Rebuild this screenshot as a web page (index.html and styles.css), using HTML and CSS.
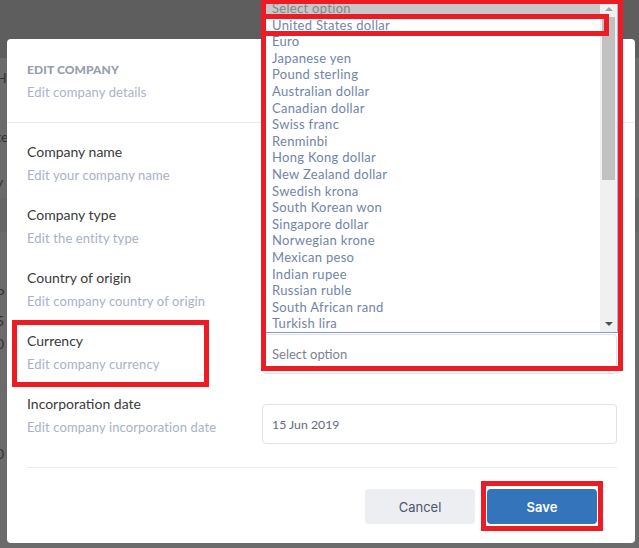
FILE: index.html
```html
<!DOCTYPE html>
<html>
<head>
<meta charset="utf-8">
<link rel="stylesheet" href="styles.css">
</head>
<body>
<div class="backdrop">
  <div class="bd-top"></div>
  <div class="bd-body">
    <div class="bd-line l1">H</div>
    <div class="bd-line l2">te</div>
    <div class="bd-line l3">y</div>
    <div class="bd-band"></div>
    <div class="bd-line l4">P</div>
    <div class="bd-line l5">5</div>
    <div class="bd-line l6">0</div>
    <div class="bd-line l7">0</div>
  </div>
</div>

<div class="modal">
  <div class="modal-head">
    <div class="title">EDIT COMPANY</div>
    <div class="subtitle">Edit company details</div>
  </div>
  <div class="modal-body">
    <div class="row">
      <div class="lbl"><div class="label">Company name</div><div class="desc">Edit your company name</div></div>
      <div class="field"></div>
    </div>
    <div class="row">
      <div class="lbl"><div class="label">Company type</div><div class="desc">Edit the entity type</div></div>
      <div class="field"></div>
    </div>
    <div class="row">
      <div class="lbl"><div class="label">Country of origin</div><div class="desc">Edit company country of origin</div></div>
      <div class="field"></div>
    </div>
    <div class="row">
      <div class="lbl"><div class="label">Currency</div><div class="desc">Edit company currency</div></div>
      <div class="field f-currency"><div class="box">Select option</div></div>
    </div>
    <div class="row">
      <div class="lbl"><div class="label">Incorporation date</div><div class="desc">Edit company incorporation date</div></div>
      <div class="field f-date"><div class="box date">15 Jun 2019</div></div>
    </div>
  </div>
  <div class="modal-foot">
    <button class="btn cancel">Cancel</button>
    <button class="btn save">Save</button>
  </div>
</div>

<div class="listbox">
  <div class="options">
    <div class="opt hl">Select option</div>
    <div class="opt">United States dollar</div>
    <div class="opt">Euro</div>
    <div class="opt">Japanese yen</div>
    <div class="opt">Pound sterling</div>
    <div class="opt">Australian dollar</div>
    <div class="opt">Canadian dollar</div>
    <div class="opt">Swiss franc</div>
    <div class="opt">Renminbi</div>
    <div class="opt">Hong Kong dollar</div>
    <div class="opt">New Zealand dollar</div>
    <div class="opt">Swedish krona</div>
    <div class="opt">South Korean won</div>
    <div class="opt">Singapore dollar</div>
    <div class="opt">Norwegian krone</div>
    <div class="opt">Mexican peso</div>
    <div class="opt">Indian rupee</div>
    <div class="opt">Russian ruble</div>
    <div class="opt">South African rand</div>
    <div class="opt">Turkish lira</div>
  </div>
  <div class="scroll">
    <div class="sb-btn"><span class="arrow-up"></span></div>
    <div class="thumb"></div>
    <div class="sb-space"></div>
    <div class="sb-btn"><span class="arrow-down"></span></div>
  </div>
</div>

<div class="mark mark-list"></div>
<div class="mark mark-item"></div>
<div class="mark mark-currency"></div>
<div class="mark mark-save"></div>
</body>
</html>
```

FILE: styles.css
```css
* { box-sizing: border-box; margin: 0; padding: 0; }
html, body { width: 639px; height: 548px; overflow: hidden; }
body {
  position: relative;
  background: #6b6b6b;
  font-family: Lato, "Liberation Sans", sans-serif;
}

/* dimmed page behind the dialog */
.backdrop { height: 548px; display: flex; flex-direction: column; }
.bd-top { height: 58px; background: #5e5e5e; flex: none; }
.bd-body { flex: 1; color: #333; font-size: 14px; }
.bd-line { margin-left: -4px; line-height: 16px; }
.l1 { margin-top: 12px; }
.l2 { margin-top: 43px; }
.l3 { margin-top: 29px; }
.bd-band { height: 34px; margin-top: 8px; background: #666; }
.l4 { margin-top: 54px; }
.l5 { margin-top: 11px; }
.l6 { margin-top: 7px; }
.l7 { margin-top: 94px; }

/* dialog */
.modal {
  position: absolute;
  left: 7px;
  top: 39px;
  width: 628px;
  height: 504px;
  background: #fff;
  border-radius: 4px;
  display: flex;
  flex-direction: column;
}
.modal-head {
  padding: 23px 20px 21px;
  border-bottom: 1px solid #ebebeb;
}
.title {
  font-size: 12px;
  font-weight: 900;
  line-height: 16px;
  color: #979eac;
  letter-spacing: 0.1px;
}
.subtitle {
  margin-top: 5px;
  font-size: 13px;
  line-height: 18px;
  color: #a9b3c8;
  letter-spacing: 0.1px;
}

.modal-body { padding: 19px 18px 10px 20px; }
.row { height: 63px; display: flex; align-items: flex-start; }
.lbl { width: 235px; flex: none; }
.label { font-size: 14px; line-height: 20px; color: #3a3a3a; }
.desc { margin-top: 3px; font-size: 13px; line-height: 20px; color: #a8b1c6; letter-spacing: 0.12px; }
.field { flex: 1; }
.f-currency { margin-top: 3px; }
.f-date { margin-top: 10px; }
.box {
  height: 40px;
  border: 1px solid #e0e2e6;
  border-radius: 4px;
  padding: 0 9px;
  display: flex;
  align-items: center;
  font-size: 13px;
  color: #7a8196;
}
.box.date { color: #636b7b; font-size: 12.3px; }

.modal-foot {
  margin: 0 18px 0 20px;
  border-top: 1px solid #ececec;
  padding: 21px 20px 0 0;
  display: flex;
  justify-content: flex-end;
  gap: 12px;
}
.btn {
  width: 110px;
  height: 35px;
  border: none;
  border-radius: 4px;
  font-family: Inter, "Noto Sans", sans-serif;
  font-size: 13px;
}
.cancel { background: #eceef1; color: #4b566f; }
.save { background: #3474ba; color: #fff; font-weight: 600; }

/* open dropdown list */
.listbox {
  position: absolute;
  left: 266px;
  top: 0;
  width: 352px;
  height: 333px;
  background: #fff;
  border-right: 1px solid #a3b5d8;
  border-bottom: 1px solid #8699c3;
  display: flex;
}
.options { flex: 1; overflow: hidden; }
.opt {
  height: 16.6px;
  line-height: 16.6px;
  padding-left: 6px;
  font-size: 13px;
  letter-spacing: 0.3px;
  color: #7284a9;
  white-space: nowrap;
}
.opt.hl { background: #c8c8c8; color: #868686; }
.scroll {
  width: 17px;
  flex: none;
  background: #f0f0f0;
  display: flex;
  flex-direction: column;
  align-items: center;
}
.sb-btn { height: 17px; width: 17px; display: flex; align-items: center; justify-content: center; flex: none; }
.thumb { width: 13px; height: 163px; background: #c1c1c1; flex: none; }
.sb-space { flex: 1; }
.arrow-up {
  width: 0; height: 0;
  border-left: 4px solid transparent;
  border-right: 4px solid transparent;
  border-bottom: 4px solid #a3a3a3;
}
.arrow-down {
  width: 0; height: 0;
  border-left: 4px solid transparent;
  border-right: 4px solid transparent;
  border-top: 4px solid #505050;
}

/* red annotation boxes */
.mark { position: absolute; border: 5px solid #ed1c24; }
.mark-list { left: 261px; top: -1px; width: 362px; height: 372px; }
.mark-item { left: 261px; top: 14px; width: 348px; height: 22px; }
.mark-currency { left: 12px; top: 320px; width: 197px; height: 67px; }
.mark-save { left: 481px; top: 481px; width: 122px; height: 50px; }
```
